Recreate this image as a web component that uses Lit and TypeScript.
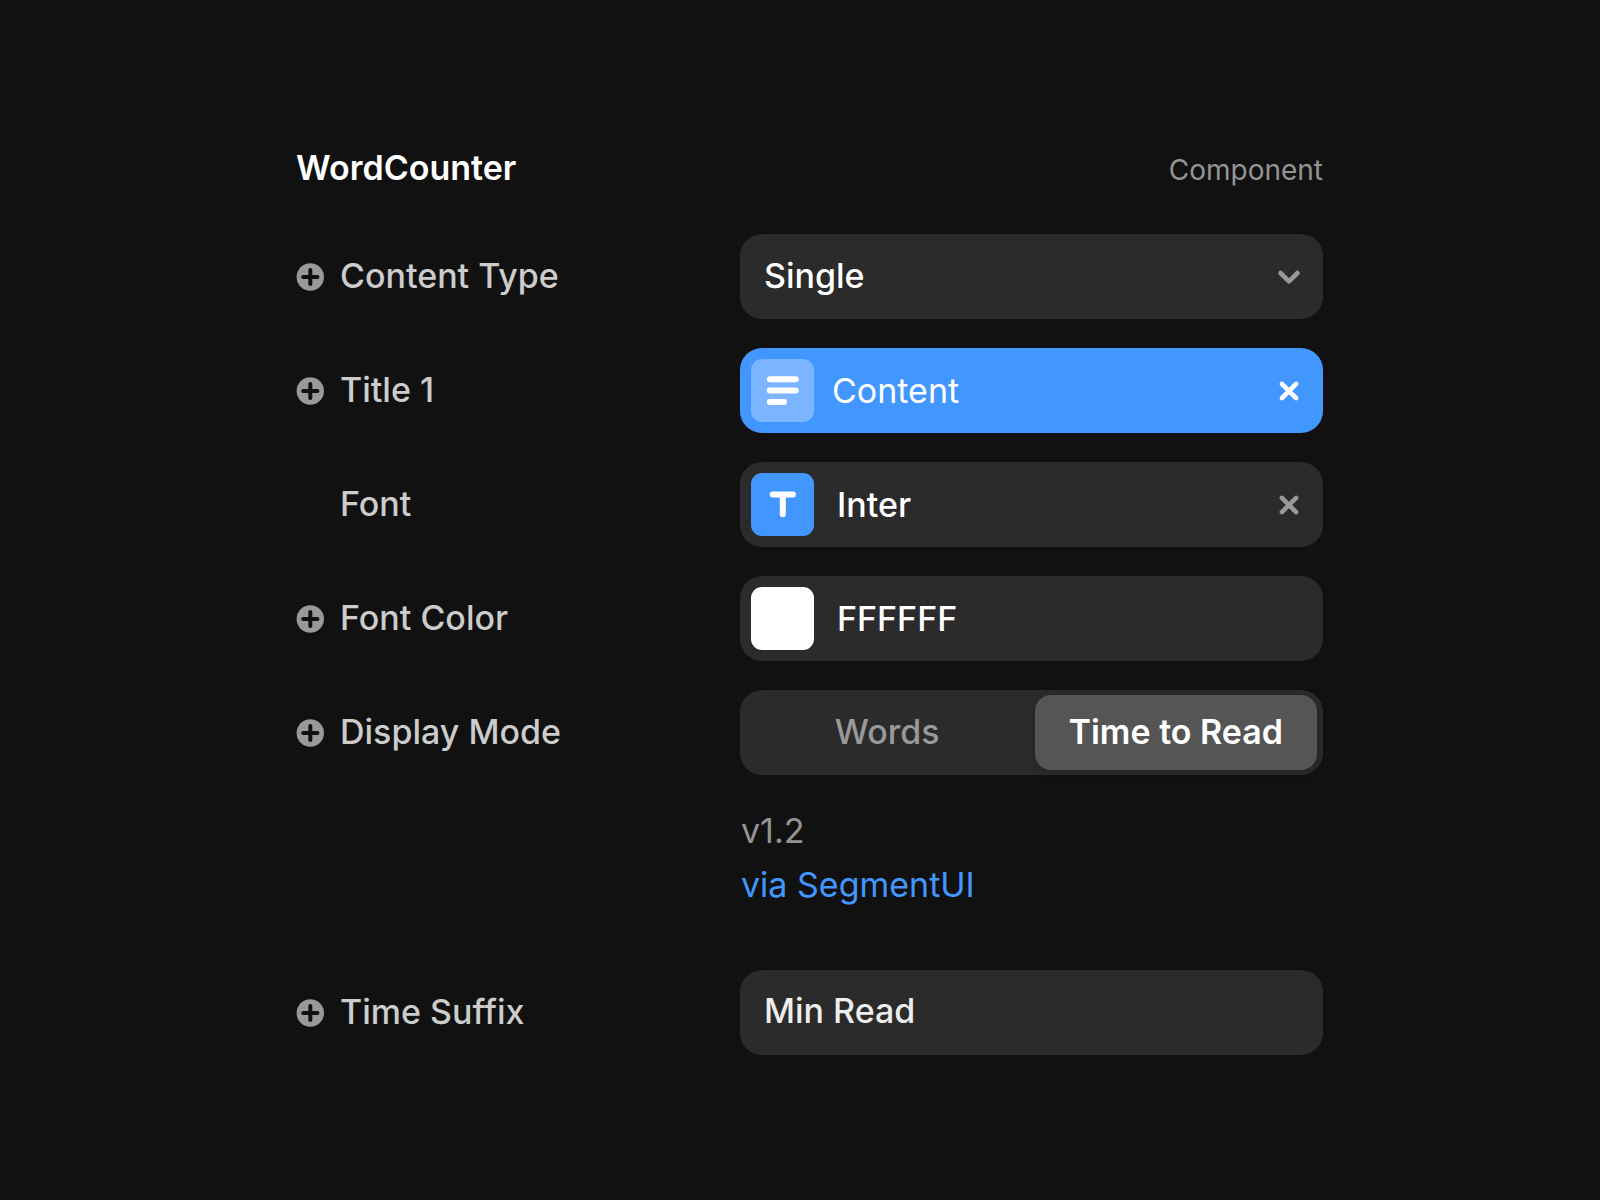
import { LitElement, html, css, svg, nothing } from "lit";
import type { TemplateResult } from "lit";
import { customElement, property, state } from "lit/decorators.js";

const plusIcon = svg`
  <svg class="icon" viewBox="0 0 28 28" width="28" height="28" aria-hidden="true">
    <circle cx="14.3" cy="14" r="13.7" fill="#999" />
    <path d="M14.3 6.9v14.2M7.2 14h14.2" stroke="#111" stroke-width="4" stroke-linecap="round" />
  </svg>`;

const crossIcon = svg`
  <svg class="icon" viewBox="0 0 24 24" width="24" height="24" aria-hidden="true">
    <path d="M4.9 4.9l14.2 14.2M19.1 4.9L4.9 19.1" stroke="currentColor" stroke-width="4.6" stroke-linecap="round" />
  </svg>`;

const chevronIcon = svg`
  <svg class="icon chevron" viewBox="0 0 24 24" width="24" height="24" aria-hidden="true">
    <path d="M3.5 8L12 16.3L20.5 8" fill="none" stroke="#999" stroke-width="4.6" stroke-linecap="round" stroke-linejoin="round" />
  </svg>`;

const linesIcon = svg`
  <svg class="icon" viewBox="0 0 63 63" width="63" height="63" aria-hidden="true">
    <path d="M18.8 20.3h26M18.8 31.6h26M18.8 43h14.2" stroke="#fff" stroke-width="6" stroke-linecap="round" />
  </svg>`;

const textIcon = svg`
  <svg class="icon" viewBox="0 0 63 63" width="63" height="63" aria-hidden="true">
    <path d="M21.7 21.4h20.2M31.8 21.4v19.8" stroke="#fff" stroke-width="6" stroke-linecap="round" />
  </svg>`;

@customElement("property-row")
class PropertyRow extends LitElement {
  @property() label = "";
  @property({ type: Boolean }) variable = false;

  static styles = css`
    :host {
      display: grid;
      grid-template-columns: 444fr 583fr;
      align-items: center;
    }
    .name {
      display: grid;
      grid-template-columns: 28px 1fr;
      column-gap: 16px;
      align-items: center;
      line-height: 40px;
      font-weight: 500;
      color: #ccc;
    }
    .add {
      display: block;
      padding: 0;
      border: 0;
      background: none;
      cursor: pointer;
    }
    .icon {
      display: block;
    }
    .text {
      grid-column: 2;
      padding-bottom: 2px;
    }
  `;

  render() {
    return html`
      <div class="name">
        ${this.variable
          ? html`<button class="add" type="button" aria-label="Add variable for ${this.label}">${plusIcon}</button>`
          : nothing}
        <span class="text">${this.label}</span>
      </div>
      <slot></slot>
    `;
  }
}

@customElement("app-root")
class AppRoot extends LitElement {
  @state() private mode = "Time to Read";

  static styles = css`
    * {
      box-sizing: border-box;
    }
    :host {
      display: block;
      min-height: 100vh;
      padding: 148px 24px;
      box-sizing: border-box;
      background: #111;
      color: #fff;
      font-family: Inter, "Liberation Sans", sans-serif;
      font-size: 34px;
      line-height: 40px;
    }
    .panel {
      max-width: 1048px;
      margin: 0 auto;
      padding: 0 1px 0 20px;
    }
    .head {
      display: flex;
      justify-content: space-between;
      align-items: baseline;
      margin-bottom: 44px;
    }
    .title {
      margin: 0;
      font-size: 34px;
      font-weight: 600;
    }
    .kind {
      font-size: 28px;
      color: #949494;
    }
    .rows {
      display: grid;
      row-gap: 29px;
    }
    .field {
      display: flex;
      align-items: center;
      width: 100%;
      min-width: 0;
      height: 85px;
      padding: 0 22px 0 11px;
      border: 0;
      border-radius: 22px;
      background: #2b2b2b;
      color: #fff;
      font: inherit;
      font-weight: 500;
    }
    .select-wrap {
      display: grid;
      align-items: center;
    }
    .select-wrap > * {
      grid-area: 1 / 1;
    }
    .select {
      appearance: none;
      padding: 0 60px 2px 24px;
      outline: none;
    }
    .chevron {
      justify-self: end;
      margin-right: 22px;
      pointer-events: none;
    }
    .icon {
      display: block;
    }
    .linked {
      background: #4297ff;
      font-weight: 400;
    }
    .tile {
      flex: none;
      width: 63px;
      height: 63px;
      border-radius: 11px;
      background: #4297ff;
    }
    .linked .tile {
      background: #7bb4ff;
    }
    .value {
      flex: 1;
      padding-left: 23px;
    }
    .linked .value {
      padding-left: 18px;
    }
    .clear {
      padding: 0;
      border: 0;
      background: none;
      color: #999;
      cursor: pointer;
    }
    .linked .clear {
      color: #fff;
    }
    .swatch {
      appearance: none;
      padding: 0;
      border: 0;
      background: #fff;
      overflow: hidden;
    }
    .swatch::-webkit-color-swatch-wrapper {
      padding: 0;
    }
    .swatch::-webkit-color-swatch {
      border: 0;
    }
    .hex {
      flex: 1;
      min-width: 0;
      height: 40px;
      padding: 0 0 0 23px;
      border: 0;
      outline: none;
      background: none;
      color: inherit;
      font: inherit;
    }
    .suffix {
      padding: 0 24px 4px 24px;
      color: #eee;
      outline: none;
    }
    .segments {
      display: grid;
      grid-template-columns: 1fr 1fr;
      gap: 6px;
      height: 85px;
      min-width: 0;
      margin: 0;
      padding: 5px 6px;
      border: 0;
      border-radius: 22px;
      background: #2b2b2b;
    }
    .segment {
      display: grid;
      place-items: center;
      padding-bottom: 2px;
      border-radius: 16px;
      color: #999;
      font-weight: 500;
      white-space: nowrap;
      cursor: pointer;
    }
    .segment > * {
      grid-area: 1 / 1;
    }
    .segment:has(:checked) {
      background: #555;
      color: #fff;
      font-weight: 600;
      box-shadow: 0 2px 8px rgba(0, 0, 0, 0.2);
    }
    .radio {
      appearance: none;
      width: 1px;
      height: 1px;
      margin: 0;
    }
    .about {
      display: grid;
      grid-template-columns: 444fr 583fr;
      margin-bottom: 29px;
      line-height: 54px;
    }
    .credits {
      grid-column: 2;
      padding-left: 1px;
    }
    .version {
      margin: 0;
      color: #949494;
    }
    .link {
      color: #4297ff;
      text-decoration: none;
    }
  `;

  private segment(name: string): TemplateResult {
    return html`
      <label class="segment">
        <input
          class="radio"
          type="radio"
          name="mode"
          .value=${name}
          ?checked=${this.mode === name}
          @change=${() => (this.mode = name)}
        />
        <span>${name}</span>
      </label>
    `;
  }

  render() {
    return html`
      <main class="panel">
        <header class="head">
          <h1 class="title">WordCounter</h1>
          <span class="kind">Component</span>
        </header>
        <div class="rows">
          <property-row label="Content Type" variable>
            <div class="select-wrap">
              <select class="field select" aria-label="Content Type">
                <option>Single</option>
              </select>
              ${chevronIcon}
            </div>
          </property-row>
          <property-row label="Title 1" variable>
            <div class="field linked">
              <span class="tile">${linesIcon}</span>
              <span class="value">Content</span>
              <button class="clear" type="button" aria-label="Remove Content">${crossIcon}</button>
            </div>
          </property-row>
          <property-row label="Font">
            <div class="field">
              <span class="tile">${textIcon}</span>
              <span class="value">Inter</span>
              <button class="clear" type="button" aria-label="Remove Inter">${crossIcon}</button>
            </div>
          </property-row>
          <property-row label="Font Color" variable>
            <div class="field">
              <input class="tile swatch" type="color" value="#ffffff" aria-label="Pick Font Color" />
              <input class="hex" type="text" value="FFFFFF" aria-label="Font Color" />
            </div>
          </property-row>
          <property-row label="Display Mode" variable>
            <fieldset class="segments" aria-label="Display Mode">
              ${this.segment("Words")} ${this.segment("Time to Read")}
            </fieldset>
          </property-row>
          <div class="about">
            <div class="credits">
              <p class="version">v1.2</p>
              <a class="link" href="#segmentui">via SegmentUI</a>
            </div>
          </div>
          <property-row label="Time Suffix" variable>
            <input class="field suffix" type="text" value="Min Read" aria-label="Time Suffix" />
          </property-row>
        </div>
      </main>
    `;
  }
}
